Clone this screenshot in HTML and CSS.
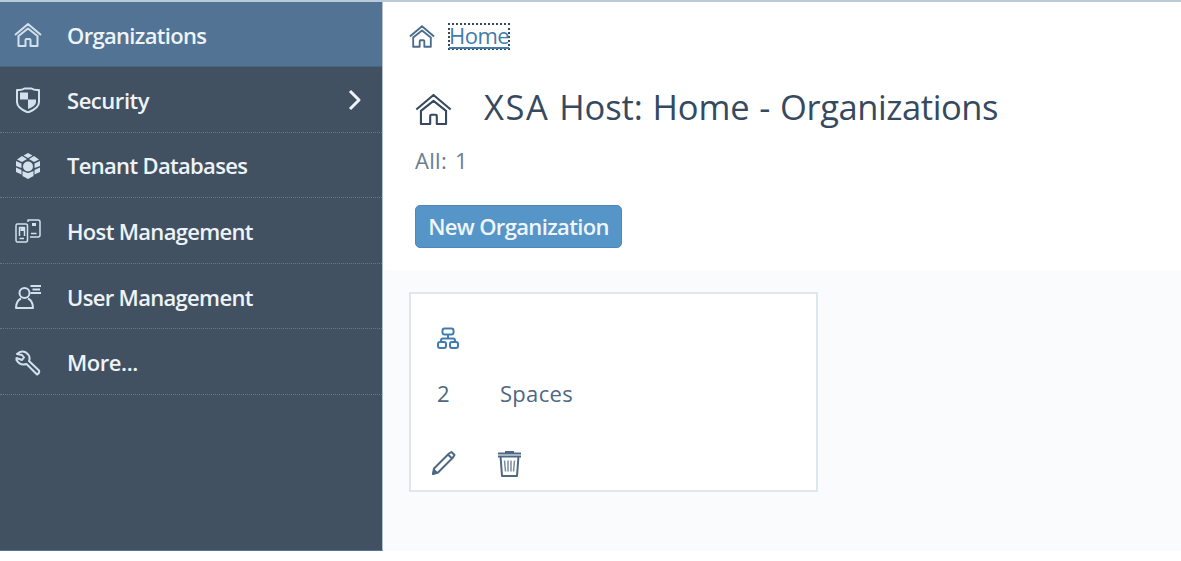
FILE: index.html
```html
<!DOCTYPE html>
<html lang="en">
<head>
<meta charset="utf-8">
<title>XSA Host: Home - Organizations</title>
<link rel="stylesheet" href="styles.css">
</head>
<body>
<svg class="defs" aria-hidden="true">
  <symbol id="home" viewBox="0 0 28 26"><path d="M1 13 14 2 27 13M4.500 14V24H11.500V18Q11.500 17 12.500 17H15.500Q16.500 17 16.500 18V24H23.500V14L14 6.500Z"/></symbol>
</svg>
<div class="app">
  <nav class="sidebar">
    <a class="item active"><svg class="icon" viewBox="0 0 28 26"><use href="#home"/></svg><span>Organizations</span></a>
    <a class="item"><svg class="icon" viewBox="0 0 28 26"><path d="M3 3Q8 3.500 10.500 1.500H17.500Q20 3.500 25 3V15Q25 21 14 25.500 3 21 3 15Z"/><path class="fill" d="M6 5.500H14V12.500H6ZM14 12.500H22V15Q22 19 14 22Z"/></svg><span class="short">Security</span><svg class="chevron" viewBox="0 0 14 22"><path d="M2 2 11 11 2 20"/></svg></a>
    <a class="item"><svg class="icon" viewBox="0 0 28 26"><g class="fill"><path d="M14 0 18.500 2.500 14 5 9.500 2.500ZM8 3 13 6 8 9 3 6.500ZM20 3 25 6.500 20 9 15 6ZM2 8 7.500 10.500V15L2 13ZM26 8 20.500 10.500V15L26 13ZM2 14.500 7.500 17V21.500L2 19ZM26 14.500 20.500 17V21.500L26 19ZM8.500 18 13.500 20H14.500L19.500 18V23L14 26 8.500 23Z"/><circle cx="14" cy="13.500" r="5"/></g></svg><span>Tenant Databases</span></a>
    <a class="item"><svg class="icon thin" viewBox="0 0 28 26"><path d="M3 6H12Q13.500 6 13.500 8V22Q13.500 24 12 24H3Q2 24 2 22V8Q2 6 3 6ZM14 4V2H24Q26 2 26 4V17Q26 19 24 19H16M5.500 20.500H10M17 15.500H22.500M5.500 18V9.500H10.500V18"/><path class="fill" d="M6.500 10H10V13H6.500ZM18 5H22V8H18Z"/></svg><span>Host Management</span></a>
    <a class="item"><svg class="icon" viewBox="0 0 28 26"><circle cx="10.500" cy="9" r="5"/><path d="M7 14.500Q2 17 2 24H19Q19 17 14 14.500M16.500 2H27M18.500 5.500H26M16.500 9H27"/></svg><span>User Management</span></a>
    <a class="item"><svg class="icon" viewBox="0 0 28 26"><path d="M3 4Q7 0 12 2.500 17 6 15 11L25 20.500Q26 23 23 24.500L12.500 14Q6 16 2.500 10V8L8 10 10 7.500 8 5Z"/></svg><span class="short">More...</span></a>
  </nav>
  <main class="main">
    <header class="header">
      <div class="crumb"><svg class="crumb-icon" viewBox="0 0 28 26"><use href="#home"/></svg><a class="home-link">Home</a></div>
      <div class="title-row"><svg class="title-icon" viewBox="0 0 28 26"><use href="#home"/></svg><h1><span class="host">XSA</span> Host: Home - <span class="section">Organizations</span></h1></div>
      <div class="count">All: 1</div>
      <button class="new-button">New Organization</button>
    </header>
    <section class="content">
      <article class="card">
        <svg class="org-icon" viewBox="0 0 22 22"><rect x="5.500" y="1.500" width="11" height="6" rx="2"/><rect x="1" y="15" width="8" height="6" rx="2"/><rect x="13" y="15" width="8" height="6" rx="2"/><path d="M11 8V11.500M4 15V13.500Q4 11.500 6 11.500H16Q18 11.500 18 13.500V15"/></svg>
        <div class="stat"><span class="number">2</span><span class="label">Spaces</span></div>
        <div class="actions">
          <svg class="pencil" viewBox="0 0 25 26"><path d="M3 18.500 18 3.500 20.500 2 23.500 5 22 7.500 7 22.500 2 24ZM17 4.500 21 8.500"/><path class="solid" d="M2.500 18 7.500 23 1 25Z"/></svg>
          <svg class="trash" viewBox="0 0 25 28"><path d="M1 3.500H24M1 6.500H24M3.500 6 5 26H20L21.500 6"/><path class="bars" d="M7.500 10.500 8.500 21.500M11 10.500V21.500M14 10.500V21.500M17.500 10.500 16.500 21.500"/><path class="solid" d="M8 3V1H17V3Z"/></svg>
        </div>
      </article>
    </section>
  </main>
</div>
</body>
</html>
```
FILE: styles.css
```css
* { box-sizing: border-box; }
body { margin: 0; height: 561px; overflow: hidden; background: #fff; font-family: "Open Sans", "Noto Sans", sans-serif; }
svg { display: block; flex: none; fill: none; stroke: currentColor; stroke-width: 2; stroke-linejoin: round; }
.defs { position: absolute; width: 0; height: 0; }
.app { display: flex; height: 551px; border-top: 2px solid #b9cad8; }
.sidebar { width: 383px; flex: none; background: #415161; border-right: 1px solid #b4c2cf; border-bottom: 1px solid #50779a; color: #edf3f8; }
.item { display: flex; align-items: center; height: 65.600px; padding: 1px 20px 0 14px; border-bottom: 1px dotted #5c7b98; font-size: 22px; font-weight: 600; line-height: 30px; letter-spacing: -0.680px; white-space: nowrap; }
.item.active { height: 65px; background: #527393; border-bottom: 1px solid #49647e; }
.item span { margin-left: 25px; }
.item .short { letter-spacing: -0.450px; }
.icon { width: 28px; height: 26px; margin-top: 1px; color: #d3e1ed; }
.thin { stroke-width: 1.500; }
.fill, .solid { fill: currentColor; stroke: none; }
.chevron { width: 14px; height: 22px; margin-left: auto; stroke-width: 3; }
.main { flex: 1; min-width: 0; display: flex; flex-direction: column; }
.header { height: 268px; padding: 20px 0 0 26px; color: #354a5f; }
.crumb { display: flex; align-items: center; height: 29px; gap: 13px; color: #427cac; }
.crumb-icon { width: 26px; height: 25px; color: #496d8d; }
.home-link { display: block; width: 62px; height: 27px; border: 2px dotted #354a5f; font-size: 22px; line-height: 21px; letter-spacing: -0.500px; text-indent: -1px; text-decoration: underline; text-underline-offset: 3px; }
.title-row { display: flex; align-items: center; height: 46px; margin: 33px 0 0 6px; gap: 32px; }
.title-icon { width: 37px; height: 35px; margin-top: 4px; stroke-width: 1.600; }
h1 { margin: 0; font-size: 34.500px; font-weight: 400; line-height: 46px; letter-spacing: -0.130px; word-spacing: 1px; white-space: nowrap; }
.host { letter-spacing: 1.600px; }
.section { letter-spacing: -0.420px; }
.count { margin: 15px 0 0 6px; font-size: 22px; line-height: 30px; height: 30px; letter-spacing: 0.300px; word-spacing: 2px; color: #6a7d90; }
.new-button { display: flex; align-items: center; justify-content: center; width: 207px; height: 43px; margin: 30px 0 0 6px; padding: 0 0 1px; border: 1px solid #5087b8; border-radius: 5px; background: #5595c8; color: #f0f5f9; font: 600 22px/30px "Open Sans", sans-serif; letter-spacing: -0.640px; white-space: nowrap; }
.content { flex: 1; padding: 22px 26px; background: #fafbfc; }
.card { width: 409px; height: 200px; padding: 33px 0 0 26px; border: 2px solid #e0e7ec; background: #fff; color: #4e6881; }
.org-icon { width: 22px; height: 22px; color: #427caf; }
.stat { display: flex; height: 30px; margin-top: 29px; font-size: 22px; line-height: 30px; letter-spacing: 0.300px; }
.number { width: 63px; }
.actions { display: flex; margin: 42px 0 0 -6px; gap: 41px; }
.pencil { width: 25px; height: 26px; }
.trash { width: 25px; height: 28px; }
.bars { stroke-width: 1.500; opacity: 0.750; }
```
